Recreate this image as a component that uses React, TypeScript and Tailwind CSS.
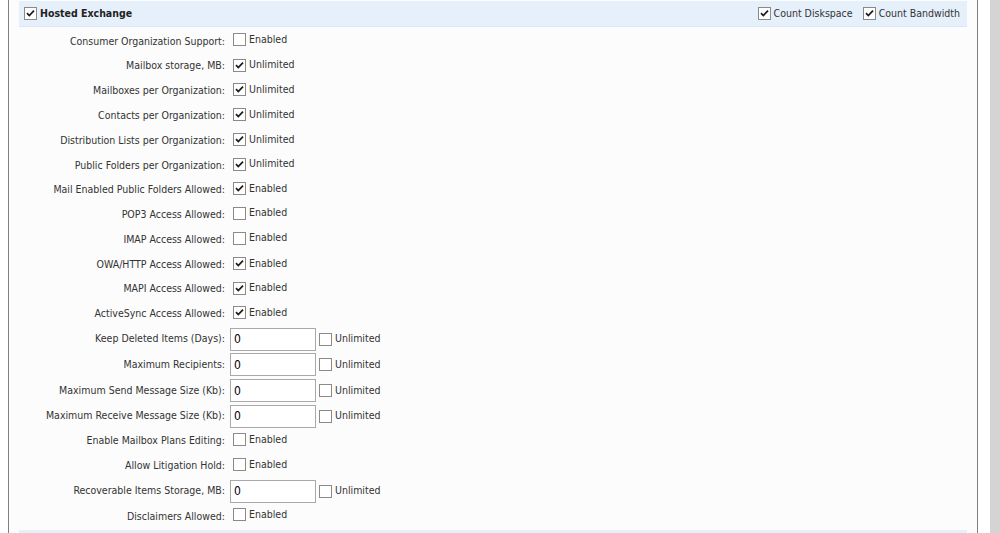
import React from "react";

type Row =
  | { label: string; kind: "check"; checked: boolean; text: string }
  | { label: string; kind: "input"; value: string };

const rows: Row[] = [
  { label: "Consumer Organization Support:", kind: "check", checked: false, text: "Enabled" },
  { label: "Mailbox storage, MB:", kind: "check", checked: true, text: "Unlimited" },
  { label: "Mailboxes per Organization:", kind: "check", checked: true, text: "Unlimited" },
  { label: "Contacts per Organization:", kind: "check", checked: true, text: "Unlimited" },
  { label: "Distribution Lists per Organization:", kind: "check", checked: true, text: "Unlimited" },
  { label: "Public Folders per Organization:", kind: "check", checked: true, text: "Unlimited" },
  { label: "Mail Enabled Public Folders Allowed:", kind: "check", checked: true, text: "Enabled" },
  { label: "POP3 Access Allowed:", kind: "check", checked: false, text: "Enabled" },
  { label: "IMAP Access Allowed:", kind: "check", checked: false, text: "Enabled" },
  { label: "OWA/HTTP Access Allowed:", kind: "check", checked: true, text: "Enabled" },
  { label: "MAPI Access Allowed:", kind: "check", checked: true, text: "Enabled" },
  { label: "ActiveSync Access Allowed:", kind: "check", checked: true, text: "Enabled" },
  { label: "Keep Deleted Items (Days):", kind: "input", value: "0" },
  { label: "Maximum Recipients:", kind: "input", value: "0" },
  { label: "Maximum Send Message Size (Kb):", kind: "input", value: "0" },
  { label: "Maximum Receive Message Size (Kb):", kind: "input", value: "0" },
  { label: "Enable Mailbox Plans Editing:", kind: "check", checked: false, text: "Enabled" },
  { label: "Allow Litigation Hold:", kind: "check", checked: false, text: "Enabled" },
  { label: "Recoverable Items Storage, MB:", kind: "input", value: "0" },
  { label: "Disclaimers Allowed:", kind: "check", checked: false, text: "Enabled" },
];

function Box({ checked }: { checked: boolean }) {
  return (
    <span className="inline-flex w-[13px] h-[13px] shrink-0 border border-[#8a8a8a] bg-white items-center justify-center">
      {checked && (
        <svg width="11" height="11" viewBox="0 0 11 11">
          <path d="M2 5.2 L4.3 7.6 L9 2.6" fill="none" stroke="#1a1a1a" strokeWidth="1.7" />
        </svg>
      )}
    </span>
  );
}

function Check({ checked, text, bold }: { checked: boolean; text: string; bold?: boolean }) {
  return (
    <span className="inline-flex items-center gap-[3px]">
      <Box checked={checked} />
      <span className={bold ? "font-bold text-[#222]" : ""}>{text}</span>
    </span>
  );
}

export default function App() {
  return (
    <div
      className="w-[1000px] h-[533px] overflow-hidden flex bg-white text-[10.5px] text-[#333]"
      style={{ fontFamily: '"DejaVu Sans Condensed", "DejaVu Sans", sans-serif' }}
    >
      <div className="w-[8px] shrink-0 bg-white" />
      <div className="w-[970px] shrink-0 border-x border-[#7f7f7f] bg-[#fcfcfc] px-[10px] pt-px">
        {/* Section header */}
        <div className="h-[26px] flex items-center justify-between bg-[#e6f0fb] border-b border-[#d9e6f5] pl-[5px] pr-[7px]">
          <Check checked={true} text="Hosted Exchange" bold />
          <div className="flex items-center gap-[10px] text-[#333]">
            <Check checked={true} text="Count Diskspace" />
            <Check checked={true} text="Count Bandwidth" />
          </div>
        </div>

        {/* Quota rows */}
        <div className="flex flex-col pt-[2px]">
          {rows.map((row, i) =>
            row.kind === "check" ? (
              <div key={i} className="flex items-center h-[24.8px]">
                <div className="w-[211px] shrink-0 text-right pr-[5px]">{row.label}</div>
                <span className="pl-[3px]">
                  <Check checked={row.checked} text={row.text} />
                </span>
              </div>
            ) : (
              <div key={i} className="flex items-center h-[25.6px]">
                <div className="w-[211px] shrink-0 text-right pr-[5px]">{row.label}</div>
                <span className="inline-flex items-center gap-[3px]">
                  <span className="w-[86px] h-[23px] border border-[#a9a9a9] bg-white flex items-center pl-[3px] text-[12px] text-black">
                    {row.value}
                  </span>
                  <Check checked={false} text="Unlimited" />
                </span>
              </div>
            )
          )}
        </div>

        {/* next section band */}
        <div className="h-[26px] bg-[#e6f0fb] mt-[1px]" />
      </div>
      <div className="w-[12px] shrink-0 bg-white" />
      <div className="w-[10px] shrink-0 bg-[#d4d4d4]" />
    </div>
  );
}
